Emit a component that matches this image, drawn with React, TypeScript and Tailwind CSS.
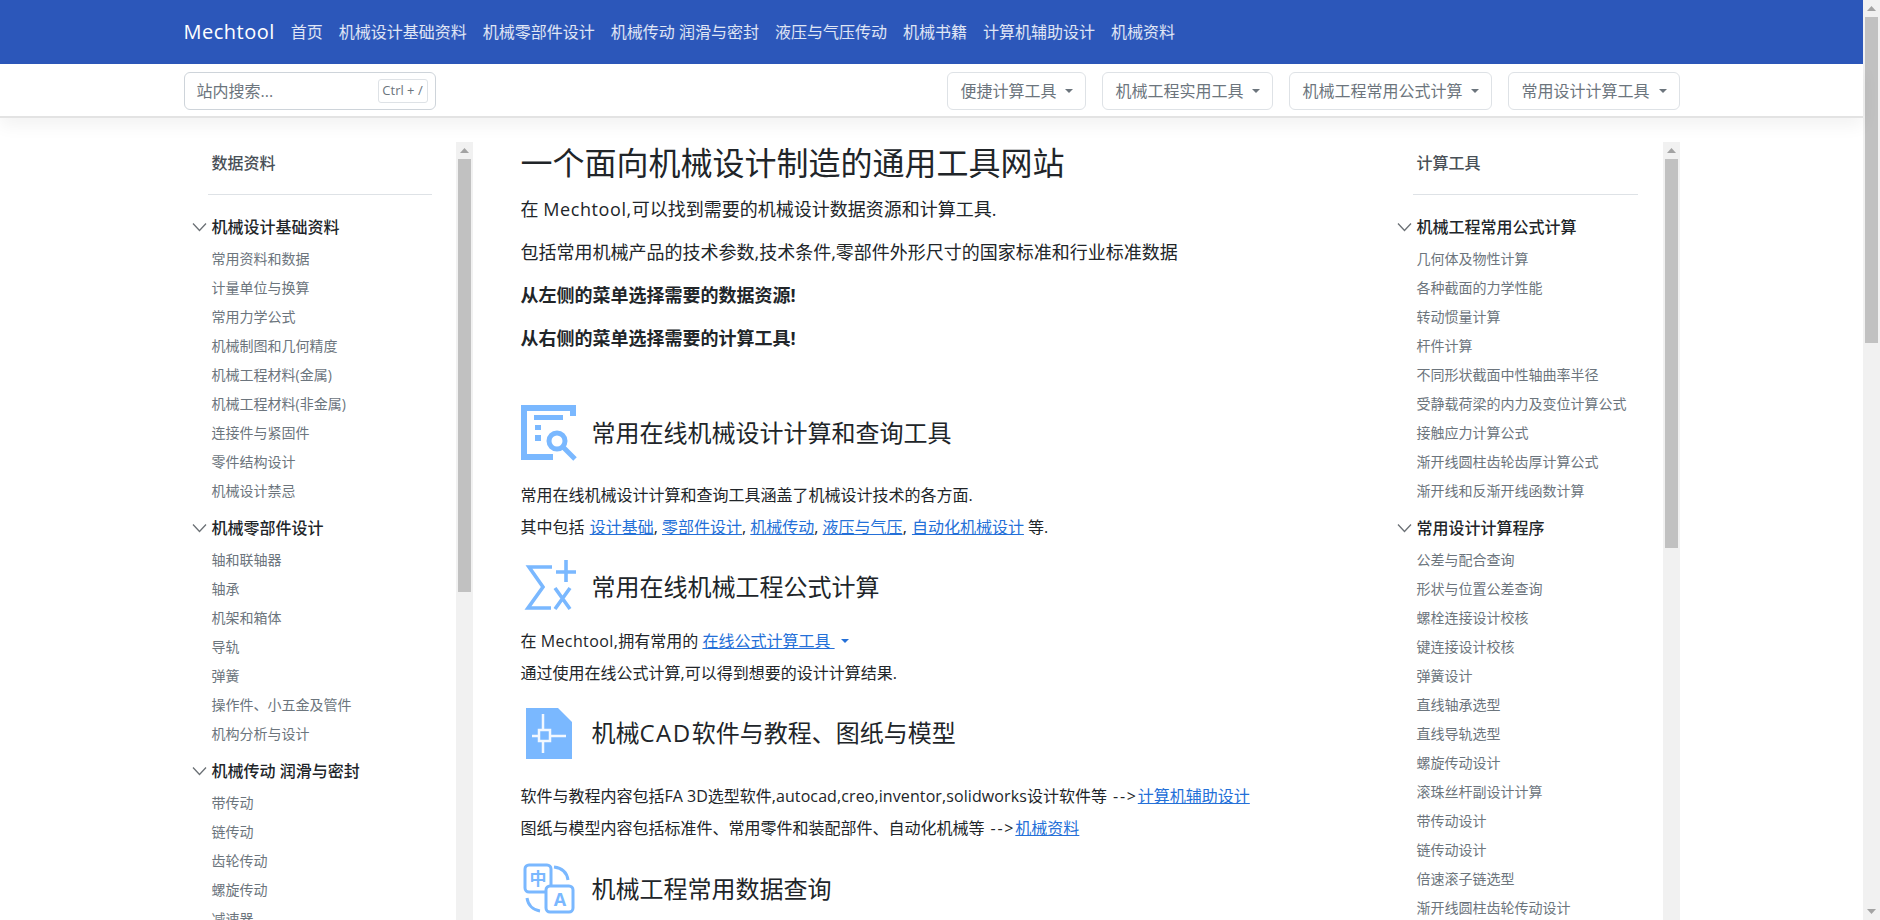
import { ReactNode } from 'react';

const navLinks = ['首页', '机械设计基础资料', '机械零部件设计', '机械传动 润滑与密封', '液压与气压传动', '机械书籍', '计算机辅助设计', '机械资料'];
const toolButtons = ['便捷计算工具', '机械工程实用工具', '机械工程常用公式计算', '常用设计计算工具'];

const leftMenu = [
  {
    title: '机械设计基础资料',
    items: ['常用资料和数据', '计量单位与换算', '常用力学公式', '机械制图和几何精度', '机械工程材料(金属)', '机械工程材料(非金属)', '连接件与紧固件', '零件结构设计', '机械设计禁忌'],
  },
  {
    title: '机械零部件设计',
    items: ['轴和联轴器', '轴承', '机架和箱体', '导轨', '弹簧', '操作件、小五金及管件', '机构分析与设计'],
  },
  {
    title: '机械传动 润滑与密封',
    items: ['带传动', '链传动', '齿轮传动', '螺旋传动', '减速器'],
  },
];

const rightMenu = [
  {
    title: '机械工程常用公式计算',
    items: ['几何体及物性计算', '各种截面的力学性能', '转动惯量计算', '杆件计算', '不同形状截面中性轴曲率半径', '受静载荷梁的内力及变位计算公式', '接触应力计算公式', '渐开线圆柱齿轮齿厚计算公式', '渐开线和反渐开线函数计算'],
  },
  {
    title: '常用设计计算程序',
    items: ['公差与配合查询', '形状与位置公差查询', '螺栓连接设计校核', '键连接设计校核', '弹簧设计', '直线轴承选型', '直线导轨选型', '螺旋传动设计', '滚珠丝杆副设计计算', '带传动设计', '链传动设计', '倍速滚子链选型', '渐开线圆柱齿轮传动设计'],
  },
];

function Arrow({ down }: { down?: boolean }) {
  return (
    <div className="flex h-[17px] shrink-0 items-center justify-center">
      <svg width="9" height="5" viewBox="0 0 9 5">
        <path d={down ? 'M0 0h9L4.5 5z' : 'M0 5h9L4.5 0z'} fill="#a3a3a3" />
      </svg>
    </div>
  );
}

function Scrollbar({ thumb, down }: { thumb: string; down?: boolean }) {
  return (
    <div className="flex h-full w-[17px] shrink-0 flex-col bg-[#f1f1f1]">
      <Arrow />
      <div className={`mx-[2px] shrink-0 bg-[#c1c1c1] ${thumb}`} />
      <div className="flex-1" />
      {down && <Arrow down />}
    </div>
  );
}

function Chevron() {
  return (
    <svg className="mr-[5px] shrink-0" width="15" height="10" viewBox="0 0 15 10" fill="none">
      <path d="M1 1.5l6.5 7 6.5-7" stroke="#6b7075" strokeWidth="1.3" />
    </svg>
  );
}

type MenuGroup = { title: string; items: string[] };

function SideMenu({ title, groups, thumb, dividerWidth }: { title: string; groups: MenuGroup[]; thumb: string; dividerWidth: string }) {
  return (
    <div className="flex h-[800px] justify-between">
      <div className="flex-1 pl-10 pt-[9px]">
        <div className="h-6 text-base font-medium leading-6 text-[#495057]">{title}</div>
        <div className={`-ml-1 mt-[19px] h-px bg-[#dee2e6] ${dividerWidth}`} />
        <div className="mt-4">
          {groups.map((group) => (
            <div key={group.title} className="mb-[7px]">
              <div className="-ml-5 flex h-8 items-center text-base font-medium text-[#212529]">
                <Chevron />
                {group.title}
              </div>
              <ul className="mt-px">
                {group.items.map((item) => (
                  <li key={item} className="flex h-[29px] items-center text-sm text-[#6c757d]">
                    {item}
                  </li>
                ))}
              </ul>
            </div>
          ))}
        </div>
      </div>
      <Scrollbar thumb={thumb} />
    </div>
  );
}

function IconSearch() {
  return (
    <svg width="56" height="56" viewBox="0 0 56 56" fill="none">
      <path d="M55 11V0H0v55h32v-6H6V6h43v5z" fill="#7ab8ff" />
      <path d="M13 10h29v5H13zM14 20h6v5h-6zM14 30h6v6h-6z" fill="#7ab8ff" />
      <circle cx="36" cy="36" r="8" stroke="#7ab8ff" strokeWidth="5" />
      <path d="M42 42l12 12" stroke="#7ab8ff" strokeWidth="5" />
    </svg>
  );
}

function IconFormula() {
  return (
    <svg width="56" height="56" viewBox="0 0 56 56" fill="none" stroke="#7ab8ff" strokeWidth="3.6">
      <path d="M31 8H8l14 20L7 49h23" />
      <path d="M35 13h20M45 1v22" />
      <path d="M34 29l15 21M49 29L34 50" />
    </svg>
  );
}

function IconDrawing() {
  return (
    <svg width="56" height="56" viewBox="0 0 56 56" fill="none">
      <path d="M5 3h32l14 14v37H5z" fill="#7ab8ff" />
      <path d="M11 31h7M30 31h15M22 9v16M22 37v11" stroke="#f2f8ff" strokeWidth="2.5" />
      <rect x="18" y="25" width="11" height="11" stroke="#f2f8ff" strokeWidth="2.5" />
    </svg>
  );
}

function IconTranslate() {
  return (
    <svg width="56" height="56" viewBox="0 0 56 56" fill="none">
      <rect x="4" y="4" width="26" height="27" rx="4" stroke="#7ab8ff" strokeWidth="3" />
      <rect x="25" y="25" width="27" height="26" rx="4" fill="#fff" stroke="#7ab8ff" strokeWidth="3" />
      <path d="M33 6c8 1 13 6 14 13M6 37c1 7 6 12 13 13" stroke="#7ab8ff" strokeWidth="3" />
      <text x="17" y="24" textAnchor="middle" fontSize="17" fontWeight="700" fill="#7ab8ff">中</text>
      <text x="39" y="45" textAnchor="middle" fontSize="18" fontWeight="700" fill="#7ab8ff">A</text>
    </svg>
  );
}

function IconHeading({ icon, title, className }: { icon: ReactNode; title: ReactNode; className: string }) {
  return (
    <div className={`flex h-14 items-center gap-[15px] ${className}`}>
      {icon}
      <h2 className="text-2xl font-normal text-[#212529]">{title}</h2>
    </div>
  );
}

function A({ children, className }: { children: ReactNode; className?: string }) {
  return <a className={`text-[#2470d8] underline ${className ?? ''}`}>{children}</a>;
}

export default function App() {
  return (
    <div className="flex h-screen overflow-hidden bg-white font-['Open_Sans','Noto_Sans_CJK_SC',sans-serif] text-[#212529]">
      <div className="flex min-w-0 flex-1 flex-col">
        <nav className="h-16 shrink-0 bg-[#2c57ba]">
          <div className="mx-auto flex h-full w-[1520px] items-center px-3 text-white">
            <span className="mr-2 text-xl tracking-[0.5px]">Mechtool</span>
            {navLinks.map((link) => (
              <a key={link} className="px-2 text-base text-white/85">
                {link}
              </a>
            ))}
          </div>
        </nav>

        <div className="relative z-10 h-[54px] shrink-0 border-b-2 border-[#e3e3e3] bg-white shadow-[0_8px_16px_rgba(0,0,0,0.05)]">
          <div className="mx-auto flex h-full w-[1520px] items-start justify-between px-3 pt-2">
            <div className="flex h-[38px] w-[252px] items-center justify-between rounded-md border border-[#ced4da] pl-3 pr-[7px]">
              <span className="text-base text-[#6c757d]">站内搜索...</span>
              <span className="flex h-6 w-[50px] items-center justify-center rounded-[3px] border border-[#dee2e6] text-[13px] text-[#6c757d]">Ctrl + /</span>
            </div>
            <div className="flex gap-4">
              {toolButtons.map((label) => (
                <button key={label} className="flex h-[38px] items-center rounded-md border border-[#dee2e6] px-3 text-base text-[#6c757d]">
                  {label}
                  <span className="ml-[9px] h-0 w-0 border-x-4 border-t-4 border-x-transparent border-t-[#6c757d]" />
                </button>
              ))}
            </div>
          </div>
        </div>

        <div className="min-h-0 flex-1 overflow-hidden">
          <div className="mx-auto flex w-[1520px] pt-6">
            <aside className="w-[301px] shrink-0">
              <SideMenu title="数据资料" groups={leftMenu} thumb="h-[433px]" dividerWidth="w-[224px]" />
            </aside>

            <main className="min-w-0 flex-1 pl-12">
              <h1 className="mt-0.5 h-[38px] text-[32px] font-normal leading-[38px]">一个面向机械设计制造的通用工具网站</h1>
              <div className="mt-[14px] text-lg leading-[27px]">
                <p className="mb-4">
                  在 <span className="tracking-[0.6px]">Mechtool,</span>可以找到需要的机械设计数据资源和计算工具.
                </p>
                <p className="mb-4">包括常用机械产品的技术参数,技术条件,零部件外形尺寸的国家标准和行业标准数据</p>
                <p className="mb-4 font-bold">从左侧的菜单选择需要的数据资源!</p>
                <p className="font-bold">从右侧的菜单选择需要的计算工具!</p>
              </div>

              <IconHeading icon={<IconSearch />} title="常用在线机械设计计算和查询工具" className="mt-[53px]" />
              <div className="mt-[22px] space-y-2 text-base leading-6">
                <p>常用在线机械设计计算和查询工具涵盖了机械设计技术的各方面.</p>
                <p>
                  其中包括 <A className="ml-px">设计基础</A>, <A>零部件设计</A>, <A>机械传动</A>, <A>液压与气压</A>, <A className="ml-px">自动化机械设计</A> 等.
                </p>
              </div>

              <IconHeading icon={<IconFormula />} title="常用在线机械工程公式计算" className="mt-5" />
              <div className="mt-[14px] space-y-2 text-base leading-6">
                <p className="flex items-center">
                  在&nbsp;<span className="tracking-[0.4px]">Mechtool,</span>拥有常用的&nbsp;<A>在线公式计算工具&nbsp;</A>
                  <span className="ml-[6px] h-0 w-0 border-x-4 border-t-4 border-x-transparent border-t-[#2470d8]" />
                </p>
                <p>通过使用在线公式计算,可以得到想要的设计计算结果.</p>
              </div>

              <IconHeading
                icon={<IconDrawing />}
                title={
                  <>
                    机械<span className="tracking-[1.5px]">CAD</span>软件与教程、图纸与模型
                  </>
                }
                className="mt-5"
              />
              <div className="mt-[23px] space-y-2 text-base leading-6">
                <p>
                  软件与教程内容包括FA 3D选型软件,<span className="tracking-[0.1px]">autocad,creo,inventor,solidworks</span>设计软件等<span className="tracking-[1.8px]"> --&gt;</span>
                  <A>计算机辅助设计</A>
                </p>
                <p>
                  图纸与模型内容包括标准件、常用零件和装配部件、自动化机械等<span className="tracking-[1.8px]"> --&gt;</span>
                  <A>机械资料</A>
                </p>
              </div>

              <IconHeading icon={<IconTranslate />} title="机械工程常用数据查询" className="mt-[21px]" />
            </main>

            <aside className="mr-3 w-[303px] shrink-0">
              <SideMenu title="计算工具" groups={rightMenu} thumb="h-[389px]" dividerWidth="w-[225px]" />
            </aside>
          </div>
        </div>
      </div>

      <Scrollbar thumb="h-[326px]" down />
    </div>
  );
}
